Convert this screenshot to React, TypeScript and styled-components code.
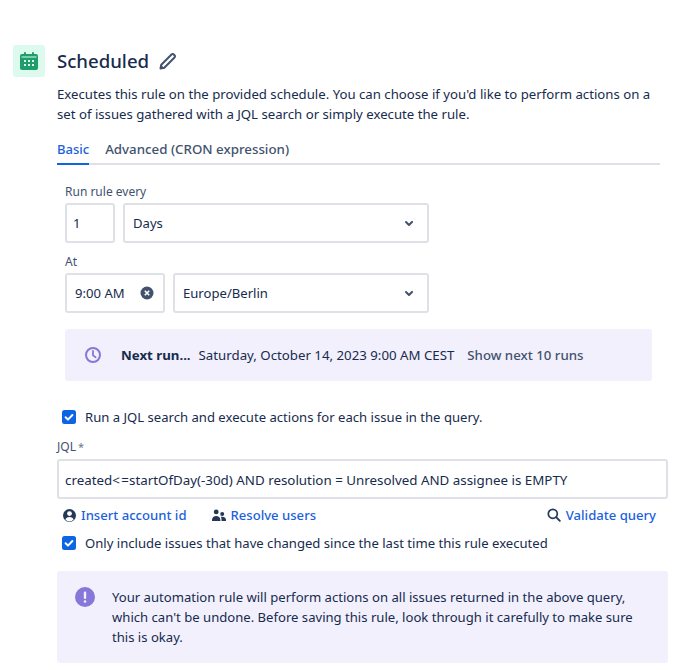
import styled, { createGlobalStyle } from "styled-components";

const GlobalStyle = createGlobalStyle`
  html, body { margin: 0; padding: 0; background: #fff; }
  body {
    font-family: "Noto Sans", "Open Sans", sans-serif;
    font-size: 13.1px;
    line-height: 20px;
    color: #172b4d;
  }
`;

const linkBlue = "#1c5fdf";

const Page = styled.div`
  width: 684px;
  height: 670px;
  box-sizing: border-box;
  padding: 45px 16px 0 13px;
  overflow: hidden;
`;

const Header = styled.div`
  display: flex;
  align-items: center;
  gap: 12px;
`;

const IconTile = styled.div`
  width: 32px;
  height: 32px;
  border-radius: 3px;
  background: #dcfbee;
  display: flex;
  align-items: center;
  justify-content: center;
`;

const Title = styled.h1`
  margin: 0;
  font-size: 18.6px;
  line-height: 28px;
  font-weight: 500;
  color: #172b4d;
`;

const EditButton = styled.span`
  display: flex;
  margin: 0 0 1px -2px;
`;

const Body = styled.div`
  margin-left: 44px;
`;

const Description = styled.p`
  margin: 7px 0 0;
  width: 604px;
  font-size: 13.2px;
`;

const Tabs = styled.div`
  display: flex;
  gap: 16px;
  margin-top: 15px;
  width: 603px;
  height: 26px;
  box-sizing: border-box;
  border-bottom: 2px solid #dfe1e6;
`;

const Tab = styled.div<{ $active?: boolean }>`
  height: 26px;
  box-sizing: border-box;
  font-size: ${(p) => (p.$active ? 13 : 13.3)}px;
  font-weight: 500;
  color: ${(p) => (p.$active ? linkBlue : "#42526e")};
  border-bottom: 2px solid ${(p) => (p.$active ? "#0c66e4" : "transparent")};
`;

const Schedule = styled.div`
  margin: 19px 0 0 8px;
  width: 587px;
`;

const FieldLabel = styled.div`
  font-size: 12px;
  line-height: 16px;
  color: #42526e;
`;

const FieldRow = styled.div`
  display: flex;
  gap: 8px;
  margin: 3px 0 11px;
`;

const Input = styled.div<{ $width: number; $tight?: boolean }>`
  width: ${(p) => p.$width}px;
  height: 40px;
  box-sizing: border-box;
  border: 2px solid #dfe1e6;
  border-radius: 3px;
  padding: 0 ${(p) => (p.$tight ? 6 : 8)}px;
  display: flex;
  align-items: center;
  justify-content: space-between;
  background: #fff;
`;

const ChevronIcon = styled.svg`
  margin-right: -2px;
`;

const Chevron = () => (
  <ChevronIcon width="24" height="24" viewBox="0 0 24 24">
    <path
      d="M8.300 10.300a1 1 0 0 1 1.400 0l2.300 2.300 2.300-2.300a1 1 0 1 1 1.400 1.400l-3 3a1 1 0 0 1-1.400 0l-3-3a1 1 0 0 1 0-1.400z"
      fill="#42526e"
    />
  </ChevronIcon>
);

const ClearIcon = styled.svg`
  margin-right: 1px;
`;

const InfoPanel = styled.div`
  height: 52px;
  margin-top: 16px;
  padding: 0 19px;
  box-sizing: border-box;
  border-radius: 3px;
  background: #f2f0fd;
  display: flex;
  align-items: center;
  font-size: 13.25px;
`;

const NextRun = styled.strong`
  margin: 0 8px 0 19px;
  font-weight: 700;
`;

const ShowRuns = styled.span`
  margin-left: 13px;
  font-weight: 500;
  color: #42526e;
`;

const CheckRow = styled.label<{ $top: number }>`
  display: flex;
  align-items: center;
  gap: 9px;
  margin: ${(p) => p.$top}px 0 0 5px;
`;

const Check = () => (
  <svg width="14" height="14" viewBox="0 0 14 14">
    <rect width="14" height="14" rx="2.500" fill="#0c66e4" />
    <path
      d="M3.600 7.200l2.400 2.400 4.400-4.600"
      fill="none"
      stroke="#fff"
      strokeWidth="2"
      strokeLinecap="round"
      strokeLinejoin="round"
    />
  </svg>
);

const JqlLabel = styled(FieldLabel)`
  margin-top: 12px;
`;

const Required = styled.span`
  color: #6b778c;
  margin-left: 2px;
  font-size: 11px;
`;

const JqlInput = styled(Input)`
  margin-top: 4px;
  padding-top: 1px;
  justify-content: flex-start;
  font-size: 13.35px;
  white-space: pre;
`;

const Operator = styled.span`
  letter-spacing: 1.5px;
`;

const Links = styled.div`
  display: flex;
  align-items: center;
  margin: 6px 0 0 5px;
  width: 594px;
`;

const LinkItem = styled.a<{ $push?: boolean; $gap?: number }>`
  display: flex;
  align-items: center;
  gap: ${(p) => p.$gap ?? 4}px;
  margin-right: ${(p) => (p.$push ? "auto" : "25px")};
  font-weight: 500;
  color: ${linkBlue};
`;

const LastLink = styled(LinkItem)`
  margin-right: 0;
`;

const Warning = styled.div`
  width: 611px;
  height: 92px;
  margin-top: 18px;
  padding: 16px 16px 0 18px;
  box-sizing: border-box;
  border-radius: 3px;
  background: #f2f0fd;
  display: flex;
  gap: 17px;
`;

const WarningIcon = styled.svg`
  flex-shrink: 0;
`;

const WarningText = styled.p`
  margin: 0;
`;

export default function App() {
  return (
    <Page>
      <GlobalStyle />
      <Header>
        <IconTile>
          <svg width="18" height="18" viewBox="0 0 18 18">
            <path
              d="M2 2h2V1a1 1 0 0 1 2 0v1h6V1a1 1 0 0 1 2 0v1h2a2 2 0 0 1 2 2v12a2 2 0 0 1-2 2H2a2 2 0 0 1-2-2V4a2 2 0 0 1 2-2z"
              fill="#1f9d6b"
            />
            <path d="M1.500 5h15" stroke="#dcfbee" strokeWidth="1" />
            <path
              d="M4 8h2v2H4zM8 8h2v2H8zM12 8h2v2h-2zM4 12h2v2H4zM8 12h2v2H8zM12 12h2v2h-2z"
              fill="#dcfbee"
            />
          </svg>
        </IconTile>
        <Title>Scheduled</Title>
        <EditButton>
          <svg width="18" height="18" viewBox="0 0 18 18">
            <path
              d="M1.500 16.500l.8-3.800L12.500 2.500a1.600 1.600 0 0 1 2.300 0l.7.700a1.600 1.600 0 0 1 0 2.300L5.300 15.700z"
              fill="none"
              stroke="#42526e"
              strokeWidth="2"
              strokeLinejoin="round"
            />
            <path d="M1 17l.8-4.400 3.600 3.600z" fill="#42526e" />
          </svg>
        </EditButton>
      </Header>
      <Body>
        <Description>
          Executes this rule on the provided schedule. You can choose if you'd like to perform
          actions on a set of issues gathered with a JQL search or simply execute the rule.
        </Description>
        <Tabs>
          <Tab $active>Basic</Tab>
          <Tab>Advanced (CRON expression)</Tab>
        </Tabs>
        <Schedule>
          <FieldLabel>Run rule every</FieldLabel>
          <FieldRow>
            <Input $width={50} $tight>
              1
            </Input>
            <Input $width={306}>
              Days
              <Chevron />
            </Input>
          </FieldRow>
          <FieldLabel>At</FieldLabel>
          <FieldRow>
            <Input $width={100}>
              9:00 AM
              <ClearIcon width="14" height="14" viewBox="0 0 14 14">
                <circle cx="7" cy="7" r="6.500" fill="#42526e" />
                <path d="M4.800 4.800l4.400 4.400M9.200 4.800l-4.400 4.400" stroke="#fff" strokeWidth="1.600" />
              </ClearIcon>
            </Input>
            <Input $width={256}>
              Europe/Berlin
              <Chevron />
            </Input>
          </FieldRow>
          <InfoPanel>
            <svg width="18" height="18" viewBox="0 0 18 18">
              <circle cx="9" cy="9" r="7" fill="none" stroke="#8777d9" strokeWidth="2" />
              <path
                d="M9 5v4.400l2.600 1.800"
                fill="none"
                stroke="#8777d9"
                strokeWidth="1.800"
                strokeLinecap="round"
              />
            </svg>
            <NextRun>Next run...</NextRun>
            Saturday, October 14, 2023 9:00 AM CEST
            <ShowRuns>Show next 10 runs</ShowRuns>
          </InfoPanel>
        </Schedule>
        <CheckRow $top={26}>
          <Check />
          Run a JQL search and execute actions for each issue in the query.
        </CheckRow>
        <JqlLabel>
          JQL<Required>*</Required>
        </JqlLabel>
        <JqlInput $width={611} $tight>
          created<Operator>&lt;</Operator>=startOfDay(-30d) AND resolution = Unresolved AND assignee
          is EMPTY
        </JqlInput>
        <Links>
          <LinkItem>
            <svg width="15" height="15" viewBox="0 0 15 15">
              <circle cx="7.500" cy="7.500" r="6.500" fill="#253858" />
              <circle cx="7.500" cy="5.600" r="2.400" fill="#fff" />
              <path d="M3.400 11.600a4.200 3.400 0 0 1 8.200 0 5.400 5.400 0 0 1-8.200 0z" fill="#fff" />
            </svg>
            Insert account id
          </LinkItem>
          <LinkItem $push $gap={5}>
            <svg width="14" height="13" viewBox="0 0 14 13">
              <circle cx="4.200" cy="2.900" r="2.400" fill="#253858" />
              <circle cx="10.200" cy="5" r="2" fill="#253858" />
              <path
                d="M0 11c0-5.500 8.400-5.500 8.400 0v1H0zM9.500 12v-1.800c0-1.200-.3-2-.8-2.400 2.500-.6 5.300.4 5.300 3V12z"
                fill="#253858"
              />
            </svg>
            Resolve users
          </LinkItem>
          <LastLink $gap={5}>
            <svg width="14" height="14" viewBox="0 0 14 14">
              <circle cx="5.800" cy="5.800" r="4.500" fill="none" stroke="#253858" strokeWidth="1.700" />
              <path d="M9.200 9.200l3.600 3.600" stroke="#253858" strokeWidth="1.900" strokeLinecap="round" />
            </svg>
            Validate query
          </LastLink>
        </Links>
        <CheckRow $top={8}>
          <Check />
          Only include issues that have changed since the last time this rule executed
        </CheckRow>
        <Warning>
          <WarningIcon width="20" height="20" viewBox="0 0 20 20">
            <circle cx="10" cy="10" r="10" fill="#8777d9" />
            <rect x="8.800" y="4.500" width="2.400" height="7.500" rx="1.200" fill="#f2f0fd" />
            <circle cx="10" cy="14.500" r="1.300" fill="#f2f0fd" />
          </WarningIcon>
          <WarningText>
            Your automation rule will perform actions on all issues returned in the above query,
            which can't be undone. Before saving this rule, look through it carefully to make sure
            this is okay.
          </WarningText>
        </Warning>
      </Body>
    </Page>
  );
}
